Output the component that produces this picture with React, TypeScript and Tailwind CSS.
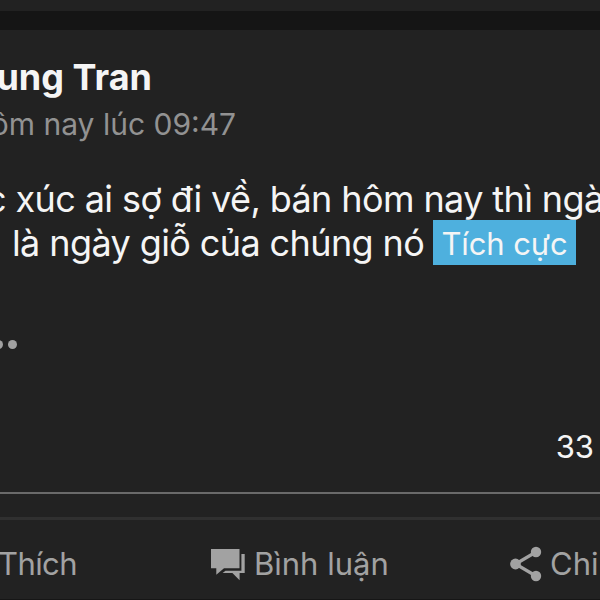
function CommentIcon() {
  return (
    <svg width="36" height="34" viewBox="0 0 36 34" fill="#a2a2a2">
      <path d="M1 2H29.5V21.3H14L6.3 27.8V21.3H1Z" />
      <path d="M31.4 7H34.7V26.1H29.6V33.2L22.4 26.1H12.6L15.5 23.7H31.4Z" />
    </svg>
  );
}

function ShareIcon() {
  return (
    <svg width="34" height="36" viewBox="0 0 34 36" fill="#a2a2a2">
      <path d="M26 6 5.5 18 26 30" fill="none" stroke="#a2a2a2" strokeWidth="3.2" />
      <circle cx="26" cy="6" r="5.2" />
      <circle cx="5.5" cy="18" r="5.4" />
      <circle cx="26" cy="30" r="5.2" />
    </svg>
  );
}

export default function App() {
  return (
    <div className="flex h-[600px] w-[600px] flex-col overflow-hidden whitespace-pre bg-[#222222] font-['Inter','Liberation_Sans',sans-serif] text-[#f5f5f5]">
      <div className="mt-[11px] h-[19px] shrink-0 bg-[#151515]" />

      <header className="mt-[23px] flex flex-col">
        <div className="flex h-12 w-[152px] justify-end text-[36px] leading-[48px] font-bold">
          ung Tran
        </div>
        <div className="mt-[5px] flex h-9 w-[236px] justify-end text-[30px] leading-9 text-[#929292]">
          ôm nay lúc 09:47
        </div>
      </header>

      <main className="mt-[35px] text-[36px] leading-[44px] tracking-[-0.6px]">
        <p className="-ml-[14px]">c xúc ai sợ đi về, bán hôm nay thì ngà</p>
        <div className="flex h-[44px]">
          <p className="w-[433px] pl-[12px]">là ngày giỗ của chúng nó</p>
          <span className="-mt-px h-[45px] w-[143px] shrink-0 bg-[#4eb0de] text-center text-[31px] leading-[47px] tracking-[-0.1px]">
            Tích cực
          </span>
        </div>
      </main>

      <div className="mt-[75px] flex h-[10px] gap-[3px]">
        <span className="-ml-[6px] size-[9px] rounded-full bg-[#a2a2a2]" />
        <span className="ml-[2px] size-[9px] rounded-full bg-[#a2a2a2]" />
      </div>

      <div className="mt-[77px] flex h-10 justify-end pr-[6px] text-[31px] leading-10">33</div>

      <div className="mt-[25px] h-[2px] shrink-0 bg-[#6a6a6a]" />
      <div className="mt-[23px] h-[3px] shrink-0 bg-[#303030]" />

      <footer className="mt-[24px] flex h-10 text-[31px] leading-10 text-[#a2a2a2]">
        <span className="-ml-[2px] w-[211px] tracking-[-0.6px]">Thích</span>
        <div className="flex w-[301px] items-center gap-[8px] pl-px">
          <CommentIcon />
          <span>Bình luận</span>
        </div>
        <div className="flex items-center gap-[6px]">
          <ShareIcon />
          <span>Chi</span>
        </div>
      </footer>

      <div className="mt-auto h-px shrink-0 bg-[#161616]" />
    </div>
  );
}
